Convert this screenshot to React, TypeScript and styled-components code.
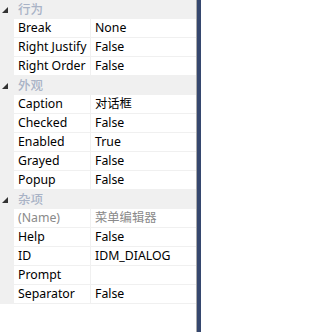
import React from "react";
import styled, { createGlobalStyle } from "styled-components";

const GlobalStyle = createGlobalStyle`
  html, body {
    margin: 0;
    padding: 0;
    background: #ffffff;
  }
  body {
    font-family: "Noto Sans", "Noto Sans CJK SC", sans-serif;
    font-size: 12.3px;
  }
`;

type Prop = { name: string; value: string; muted?: boolean };
type Group = { title: string; props: Prop[] };

const groups: Group[] = [
  {
    title: "行为",
    props: [
      { name: "Break", value: "None" },
      { name: "Right Justify", value: "False" },
      { name: "Right Order", value: "False" },
    ],
  },
  {
    title: "外观",
    props: [
      { name: "Caption", value: "对话框" },
      { name: "Checked", value: "False" },
      { name: "Enabled", value: "True" },
      { name: "Grayed", value: "False" },
      { name: "Popup", value: "False" },
    ],
  },
  {
    title: "杂项",
    props: [
      { name: "(Name)", value: "菜单编辑器", muted: true },
      { name: "Help", value: "False" },
      { name: "ID", value: "IDM_DIALOG" },
      { name: "Prompt", value: "" },
      { name: "Separator", value: "False" },
    ],
  },
];

const Page = styled.div`
  display: flex;
  width: 201px;
  height: 332px;
  overflow: hidden;
`;

const Grid = styled.div`
  flex: 1;
  display: flex;
  flex-direction: column;
  background: #ffffff;
  border-right: 1px solid #a9a9a9;
`;

const Strip = styled.div`
  width: 4px;
  background-color: #2d3c5f;
  background-image: radial-gradient(#3f5480 0.6px, transparent 0.8px);
  background-size: 2px 2px;
`;

const HeaderRow = styled.div`
  display: flex;
  align-items: center;
  height: 19px;
  background: #f0f0f0;
`;

const Toggle = styled.span`
  width: 14px;
  display: flex;
  svg {
    display: block;
    margin-top: 1px;
    margin-left: 2px;
  }
`;

const HeaderTitle = styled.span`
  padding-left: 4px;
  color: #a9b3c6;
  font-size: 12.5px;
  font-weight: 500;
  line-height: 18px;
`;

const Row = styled.div`
  display: grid;
  grid-template-columns: 14px 77px 1fr;
  height: 19px;
  box-sizing: border-box;
  border-bottom: 1px solid #f0f0f0;
`;

const Gutter = styled.div`
  background: #f0f0f0;
`;

const NameCell = styled.div<{ $muted?: boolean }>`
  box-sizing: border-box;
  border-right: 1px solid #f0f0f0;
  padding-left: 4px;
  line-height: 18px;
  white-space: nowrap;
  overflow: hidden;
  color: ${({ $muted }) => ($muted ? "#8a8a8a" : "#000000")};
`;

const ValueCell = styled.div<{ $muted?: boolean }>`
  padding-left: 4px;
  line-height: 18px;
  white-space: nowrap;
  overflow: hidden;
  color: ${({ $muted }) => ($muted ? "#8a8a8a" : "#000000")};
`;

const Arrow = () => (
  <svg width="6" height="6" viewBox="0 0 6 6">
    <polygon points="6,0 6,6 0,6" fill="#333333" />
  </svg>
);

const App = () => {
  return (
    <Page>
      <GlobalStyle />
      <Grid>
        {groups.map((g) => (
          <React.Fragment key={g.title}>
            <HeaderRow>
              <Toggle>
                <Arrow />
              </Toggle>
              <HeaderTitle>{g.title}</HeaderTitle>
            </HeaderRow>
            {g.props.map((p) => (
              <Row key={p.name}>
                <Gutter />
                <NameCell $muted={p.muted}>{p.name}</NameCell>
                <ValueCell $muted={p.muted}>{p.value}</ValueCell>
              </Row>
            ))}
          </React.Fragment>
        ))}
      </Grid>
      <Strip />
    </Page>
  );
};

export default App;
